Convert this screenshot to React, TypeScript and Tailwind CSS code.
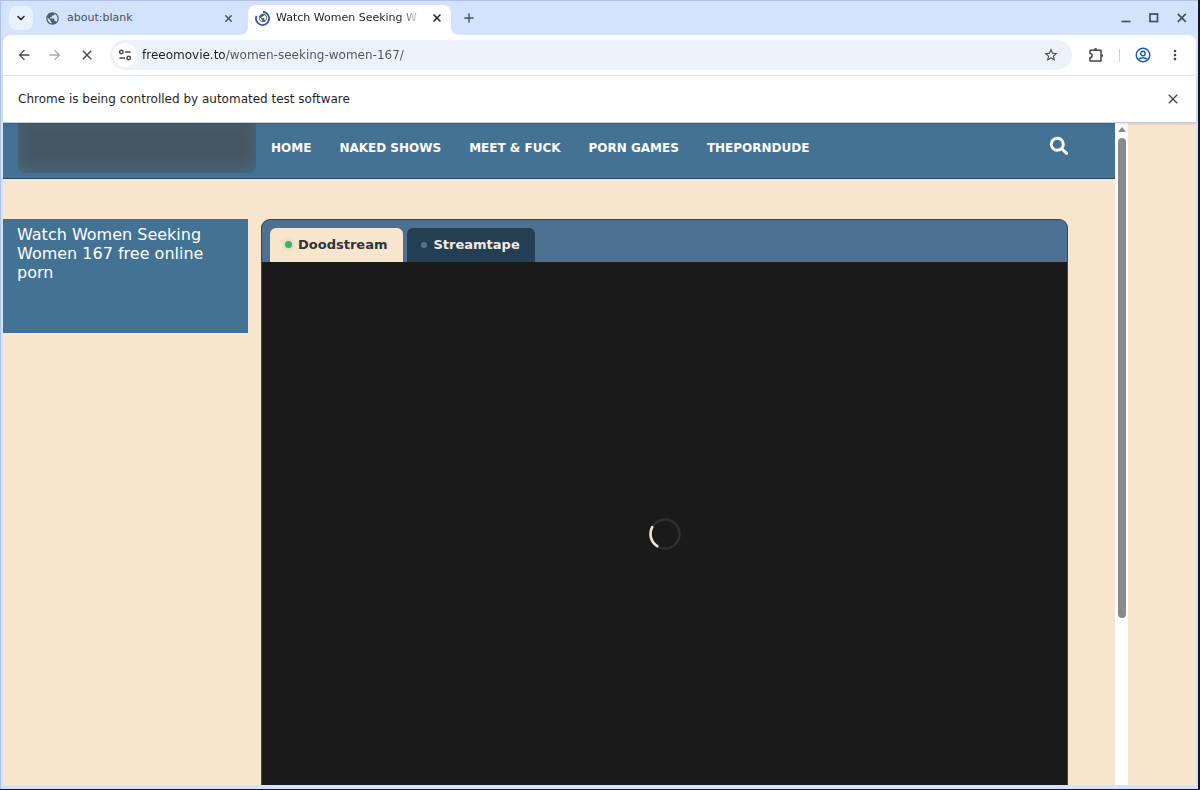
import { useState } from "react";
import { ChevronDown, Plus, X } from "lucide-react";
import {
  MdArrowBack,
  MdArrowForward,
  MdClose,
  MdMoreVert,
  MdPublic,
  MdStarBorder,
} from "react-icons/md";

const navLinks = ["HOME", "NAKED SHOWS", "MEET & FUCK", "PORN GAMES", "THEPORNDUDE"];
const servers = ["Doodstream", "Streamtape"];

function TabStrip() {
  return (
    <div className="flex h-[34px] items-center pl-[6px] pr-[8px] text-[#474f5b]">
      <button
        aria-label="Search tabs"
        className="flex size-6 items-center justify-center rounded-lg bg-[#e9f1fe] text-[#1f1f1f]"
      >
        <ChevronDown className="size-3" strokeWidth={3} />
      </button>

      <div className="ml-3 flex w-[203px] items-center pr-[14px] text-[11px]">
        <MdPublic className="size-[15px] text-[#545d6a]" />
        <span className="ml-[7px] flex-1">about:blank</span>
        <button aria-label="Close about:blank">
          <X className="size-[11px]" strokeWidth={3} />
        </button>
      </div>

      <div className="relative mt-1 flex h-[30px] w-[203px] items-center rounded-t-lg bg-white pb-1 pl-[7px] pr-[8px] text-[11px] text-[#1f1f1f]">
        <svg viewBox="0 0 8 8" className="absolute -left-2 bottom-0 size-2" aria-hidden="true">
          <path d="M8 0V8H0A8 8 0 0 0 8 0Z" fill="#fff" />
        </svg>
        <svg viewBox="0 0 8 8" className="absolute -right-2 bottom-0 size-2" aria-hidden="true">
          <path d="M0 0V8H8A8 8 0 0 1 0 0Z" fill="#fff" />
        </svg>
        <span className="relative flex size-[15px] items-center justify-center">
          <MdPublic className="size-[10px] text-[#545d6a]" />
          <svg viewBox="0 0 16 16" className="absolute inset-0 size-[15px]" fill="none" aria-hidden="true">
            <path d="M8.5 1A7 7 0 1 1 1.6 5.2" stroke="#2458b0" strokeWidth="1.9" />
          </svg>
        </span>
        <span className="ml-[6px] flex-1 whitespace-nowrap mask-r-from-85% mask-r-to-100%">
          Watch Women Seeking W
        </span>
        <button aria-label="Close tab" className="ml-[10px]">
          <X className="size-[12px]" strokeWidth={3} />
        </button>
      </div>

      <button aria-label="New tab" className="ml-[11px]">
        <Plus className="size-[14px]" strokeWidth={2.5} />
      </button>

      <div className="ml-auto flex items-center gap-4">
        <button aria-label="Minimize">
          <svg viewBox="0 0 12 12" className="size-3">
            <path d="M1.5 9.5H10.5" stroke="currentColor" strokeWidth="1.7" />
          </svg>
        </button>
        <button aria-label="Maximize">
          <svg viewBox="0 0 12 12" className="size-3">
            <rect x="2" y="2" width="7.5" height="7.5" fill="none" stroke="currentColor" strokeWidth="1.7" />
          </svg>
        </button>
        <button aria-label="Close window">
          <svg viewBox="0 0 12 12" className="size-3">
            <path d="M1.8 1.8L9.8 9.8M9.8 1.8L1.8 9.8" stroke="currentColor" strokeWidth="1.7" />
          </svg>
        </button>
      </div>
    </div>
  );
}

function Toolbar() {
  return (
    <div className="flex h-[41px] items-center rounded-t-lg border-b border-[#e3e5e9] bg-white pl-[13px] pr-[13px] text-[#474747]">
      <button aria-label="Back">
        <MdArrowBack className="size-4" />
      </button>
      <button aria-label="Forward" className="ml-[15px] text-[#a9a9a9]" disabled>
        <MdArrowForward className="size-4" />
      </button>
      <button aria-label="Stop loading" className="ml-4">
        <MdClose className="size-4" />
      </button>

      <div className="ml-[15px] flex h-[30px] flex-1 items-center rounded-full bg-[#edf1f9] pl-[3px] pr-[13px]">
        <button
          aria-label="View site information"
          className="flex size-6 items-center justify-center rounded-full bg-white"
        >
          <svg viewBox="0 0 14 14" className="size-[14px]" fill="none" stroke="currentColor" strokeWidth="1.5">
            <circle cx="3.3" cy="4" r="1.7" />
            <path d="M7 4H12.5M1.5 10H7" />
            <circle cx="10.7" cy="10" r="1.7" />
          </svg>
        </button>
        <input
          aria-label="Address bar"
          defaultValue="freeomovie.to/women-seeking-women-167/"
          className="ml-[5px] min-w-0 flex-1 bg-linear-to-r from-[#1f1f1f] from-[84px] to-[#50545b] to-[84px] bg-clip-text text-[12px] text-transparent outline-none"
        />
        <button aria-label="Bookmark this tab">
          <MdStarBorder className="size-4" />
        </button>
      </div>

      <button aria-label="Extensions" className="ml-4">
        <svg viewBox="0 0 16 16" className="size-4" fill="none" stroke="currentColor" strokeWidth="1.5">
          <path d="M2 3.2H13V14H2V10.6A2.1 2.1 0 0 0 2 6.4Z" strokeLinejoin="round" />
          <path d="M5.9 2.8A1.7 1.7 0 0 1 9.3 2.8ZM13.4 6.9A1.7 1.7 0 0 1 13.4 10.3Z" fill="currentColor" stroke="none" />
        </svg>
      </button>
      <span className="ml-[15px] h-[13px] w-px bg-[#c9d3e6]" />
      <button aria-label="Profile" className="ml-[15px] text-[#1b5bbf]">
        <svg viewBox="0 0 16 16" className="size-4" fill="none" stroke="currentColor" strokeWidth="1.4">
          <circle cx="8" cy="8" r="6.8" />
          <circle cx="8" cy="6.5" r="2.2" />
          <path d="M3.4 12.6C5.8 10.2 10.2 10.2 12.6 12.6" />
        </svg>
      </button>
      <button aria-label="Menu" className="ml-4">
        <MdMoreVert className="size-4" />
      </button>
    </div>
  );
}

function SiteHeader() {
  return (
    <header className="flex h-14 border-b border-[#29455c] bg-[#437295] pl-[15px] pr-[46px] text-white">
      <a
        href="#"
        aria-label="Site home"
        className="h-[50px] w-[238px] rounded-b-lg bg-[#465761] shadow-[inset_0_-4px_16px_#466a82]"
      />
      <nav className="ml-[15px] flex flex-1 items-center gap-7 pb-[6px] text-[12px] font-bold">
        {navLinks.map((label) => (
          <a key={label} href="#" className="whitespace-nowrap">
            {label}
          </a>
        ))}
      </nav>
      <button aria-label="Search" className="pb-[9px]">
        <svg viewBox="0 0 20 20" className="size-5" fill="none" stroke="currentColor" strokeWidth="3">
          <circle cx="8.3" cy="8.2" r="6" />
          <path d="M12.8 12.7L17.6 17.4" strokeLinecap="round" />
        </svg>
      </button>
    </header>
  );
}

function Player() {
  const [active, setActive] = useState(servers[0]);

  return (
    <section className="flex flex-1 flex-col overflow-hidden rounded-t-[9px] border-x border-t border-[#2c4a62] bg-[#4e7191]">
      <div role="tablist" className="flex h-[42px] items-end gap-1 pl-2">
        {servers.map((name) => (
          <button
            key={name}
            role="tab"
            aria-selected={name === active}
            onClick={() => setActive(name)}
            className={
              name === active
                ? "flex h-[34px] items-center gap-[6px] rounded-t-md bg-[#f7e5cd] pb-px pl-[15px] pr-4 text-[13px] font-bold text-[#2c3543]"
                : "flex h-[34px] items-center gap-[6px] rounded-t-md bg-[#243f53] pb-px pl-[14px] pr-[15px] text-[13px] font-bold text-[#f0eae1]"
            }
          >
            <span
              className={
                name === active
                  ? "size-[7px] rounded-full bg-[#37b56a] shadow-[0_0_4px_#8fd9a0]"
                  : "size-[6px] rounded-full bg-[#587180]"
              }
            />
            {name}
          </button>
        ))}
      </div>
      <div className="flex flex-1 items-center justify-center bg-[#1a1a1a] pb-5 pt-10">
        <svg viewBox="0 0 32 32" className="size-8" fill="none" aria-label="Loading">
          <circle cx="16" cy="16" r="14.5" stroke="#2c3136" strokeWidth="2.4" />
          <path d="M3.2 9.2A14.5 14.5 0 0 0 8.2 28.2" stroke="#f3e6d0" strokeWidth="2.6" strokeLinecap="round" />
        </svg>
      </div>
    </section>
  );
}

export default function App() {
  return (
    <div className="h-screen overflow-hidden bg-[#101820] pb-px pr-[2px] font-['DejaVu_Sans',sans-serif]">
      <div className="flex h-full flex-col border-l border-t border-[#b1c1e2] bg-[#d3e3fd] pb-1 pl-[2px] pr-[2px]">
        <TabStrip />
        <Toolbar />
        <div className="z-10 flex h-[47px] shrink-0 items-center justify-between border-b border-[#c5ccd5] bg-white pl-[15px] pr-[15px] text-[12px] text-[#1f1f1f] shadow-sm">
          <p>Chrome is being controlled by automated test software</p>
          <button aria-label="Dismiss">
            <MdClose className="size-4 text-[#474747]" />
          </button>
        </div>

        <div className="flex min-h-0 flex-1 bg-[#f7e5cd] pr-[68px]">
          <div className="flex flex-1 flex-col">
            <SiteHeader />
            <main className="flex flex-1 gap-[13px] pr-[47px] pt-10">
              <aside className="h-[114px] w-[245px] bg-[#437295] px-[14px] pt-[6px]">
                <h1 className="text-[16px] leading-[19px] text-white">
                  Watch Women Seeking Women 167 free online porn
                </h1>
              </aside>
              <Player />
            </main>
          </div>
          <div className="flex w-[13px] flex-col items-center bg-white pt-1" aria-hidden="true">
            <svg viewBox="0 0 8 5" className="h-[5px] w-2">
              <path d="M0 5L4 0L8 5Z" fill="#858585" />
            </svg>
            <span className="mt-[6px] h-[73%] w-2 rounded-full bg-[#888a89]" />
          </div>
        </div>
      </div>
    </div>
  );
}
